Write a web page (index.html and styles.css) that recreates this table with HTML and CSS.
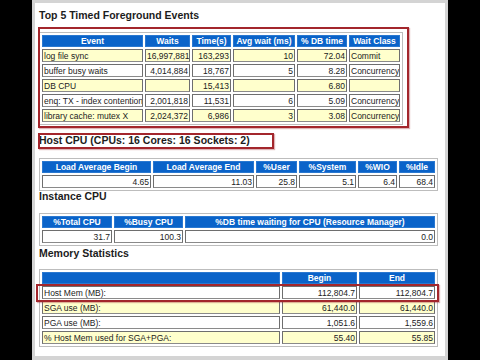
FILE: index.html
```html
<!DOCTYPE html>
<html>
<head>
<meta charset="utf-8">
<link rel="stylesheet" href="styles.css">
</head>
<body>
<div class="frame">
  <div class="page">
    <h3 class="sec s-top">Top 5 Timed Foreground Events</h3>
    <table class="awr t-top">
      <colgroup><col class="c101"><col class="c45"><col class="c39"><col class="c62"><col class="c50"><col class="c51"></colgroup>
      <tr><th>Event</th><th>Waits</th><th>Time(s)</th><th>Avg wait (ms)</th><th>% DB time</th><th>Wait Class</th></tr>
      <tr class="y"><td>log file sync</td><td class="n">16,997,881</td><td class="n">163,293</td><td class="n">10</td><td class="n">72.04</td><td>Commit</td></tr>
      <tr><td>buffer busy waits</td><td class="n">4,014,884</td><td class="n">18,767</td><td class="n">5</td><td class="n">8.28</td><td>Concurrency</td></tr>
      <tr class="y"><td>DB CPU</td><td class="n"></td><td class="n">15,413</td><td class="n"></td><td class="n">6.80</td><td></td></tr>
      <tr><td>enq: TX - index contention</td><td class="n">2,001,818</td><td class="n">11,531</td><td class="n">6</td><td class="n">5.09</td><td>Concurrency</td></tr>
      <tr class="y"><td>library cache: mutex X</td><td class="n">2,024,372</td><td class="n">6,986</td><td class="n">3</td><td class="n">3.08</td><td>Concurrency</td></tr>
    </table>

    <h3 class="sec s-host">Host CPU (CPUs: 16 Cores: 16 Sockets: 2)</h3>
    <table class="awr t-wide t-host">
      <colgroup><col class="c109"><col class="c101"><col class="c41"><col class="c57"><col class="c39"><col class="c36"></colgroup>
      <tr><th>Load Average Begin</th><th>Load Average End</th><th>%User</th><th>%System</th><th>%WIO</th><th>%Idle</th></tr>
      <tr><td class="n">4.65</td><td class="n">11.03</td><td class="n">25.8</td><td class="n">5.1</td><td class="n">6.4</td><td class="n">68.4</td></tr>
    </table>

    <h3 class="sec s-inst">Instance CPU</h3>
    <table class="awr t-wide t-inst">
      <colgroup><col class="c70"><col class="c69"><col class="c250"></colgroup>
      <tr><th>%Total CPU</th><th>%Busy CPU</th><th>%DB time waiting for CPU (Resource Manager)</th></tr>
      <tr><td class="n">31.7</td><td class="n">100.3</td><td class="n">0.0</td></tr>
    </table>

    <h3 class="sec s-mem">Memory Statistics</h3>
    <table class="awr t-wide t-mem">
      <colgroup><col class="c238"><col class="c75"><col class="c76"></colgroup>
      <tr><th></th><th>Begin</th><th>End</th></tr>
      <tr><td>Host Mem (MB):</td><td class="n">112,804.7</td><td class="n">112,804.7</td></tr>
      <tr class="y"><td>SGA use (MB):</td><td class="n">61,440.0</td><td class="n">61,440.0</td></tr>
      <tr><td>PGA use (MB):</td><td class="n">1,051.6</td><td class="n">1,559.6</td></tr>
      <tr class="y"><td>% Host Mem used for SGA+PGA:</td><td class="n">55.40</td><td class="n">55.85</td></tr>
    </table>

    <div class="mark mark-top"></div>
    <div class="mark mark-host"></div>
    <div class="mark mark-mem"></div>
  </div>
</div>
</body>
</html>
```

FILE: styles.css
```css
* { box-sizing: border-box; }
html, body { margin: 0; padding: 0; }
body {
  background: #000;
  font-family: "Liberation Sans", Arial, sans-serif;
  color: #1a1a1a;
}
.frame {
  width: 416px;
  height: 360px;
  margin-left: 32px;
  border: 3px solid #d4d4d4;
  border-bottom-width: 4px;
  background: #fff;
}
.page {
  position: relative;
  height: 353px;
  padding-left: 4px;
}
.sec {
  margin: 0;
  font-size: 10.5px;
  line-height: 13px;
  font-weight: bold;
  color: #1c1c1c;
}
.s-top { padding-top: 5.5px; }
.s-host { margin-top: 8.5px; }
.s-inst { margin-top: -1px; }
.s-mem { margin-top: 1px; }

.awr {
  border-collapse: separate;
  border-spacing: 2px;
  border: 1px solid #bdbdbd;
  table-layout: fixed;
  font-size: 8.5px;
  line-height: 10px;
}
.t-top { width: 364px; margin-top: 10.5px; }
.t-wide { width: 399px; }
.t-host { margin-top: 11.5px; }
.t-inst { margin-top: 10px; }
.t-mem { margin-top: 9px; }

.c36 { width: 36px; } .c39 { width: 39px; } .c41 { width: 41px; }
.c45 { width: 45px; } .c50 { width: 50px; } .c51 { width: 51px; }
.c57 { width: 57px; } .c62 { width: 62px; } .c69 { width: 69px; }
.c70 { width: 70px; } .c75 { width: 75px; } .c76 { width: 76px; }
.c101 { width: 101px; } .c109 { width: 109px; }
.c238 { width: 238px; } .c250 { width: 250px; }

.awr th {
  height: 12px;
  padding: 0 1px;
  background: #0a63c9;
  color: #fff;
  font-weight: bold;
  text-align: center;
  white-space: nowrap;
  overflow: hidden;
  border: 1px solid #2a78d0;
}
.awr td {
  height: 13px;
  padding: 0 1px;
  border: 1px solid #6e6e6e;
  border-bottom-color: #8a8a8a;
  background: #fff;
  color: #222;
  white-space: nowrap;
  overflow: hidden;
  text-align: left;
}
.awr tr.y td { background: #ffffcc; }
.awr td.n { text-align: right; }

.mark {
  position: absolute;
  border: 2px solid #a3262c;
  box-shadow: 1px 1px 1px rgba(160, 40, 50, 0.35);
}
.mark-top { left: 3px; top: 24px; width: 371px; height: 101px; }
.mark-host { left: 3px; top: 130px; width: 236px; height: 16px; }
.mark-mem { left: 1px; top: 281px; width: 403px; height: 18px; }
```
